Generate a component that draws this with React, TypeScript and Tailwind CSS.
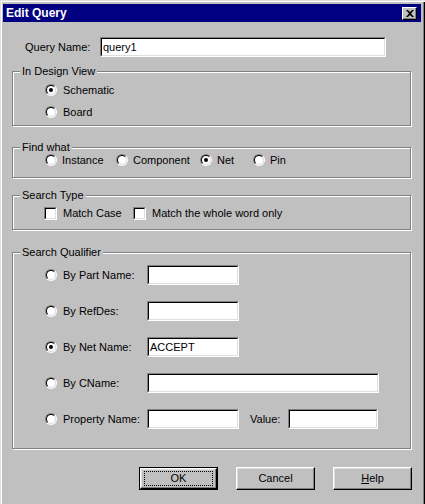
import React from "react";

const font = { fontFamily: '"Liberation Sans", Arial, sans-serif' };

function Radio({ checked = false }: { checked?: boolean }) {
  return (
    <span className="inline-block w-[12px] h-[12px] shrink-0 rounded-full border border-t-[#808080] border-l-[#808080] border-b-white border-r-white">
      <span className="flex w-full h-full items-center justify-center rounded-full border border-t-black border-l-black border-b-[#dfdfdf] border-r-[#dfdfdf] bg-white">
        {checked && <span className="block w-[4px] h-[4px] rounded-full bg-black" />}
      </span>
    </span>
  );
}

function Checkbox() {
  return (
    <span className="inline-block w-[13px] h-[13px] shrink-0 border border-t-[#808080] border-l-[#808080] border-b-white border-r-white">
      <span className="block w-full h-full border border-t-black border-l-black border-b-[#dfdfdf] border-r-[#dfdfdf] bg-white" />
    </span>
  );
}

function Field({ value = "", className = "" }: { value?: string; className?: string }) {
  return (
    <div
      className={`h-[20px] shrink-0 border border-t-[#808080] border-l-[#808080] border-b-white border-r-white ${className}`}
    >
      <div className="flex h-full items-center border border-t-black border-l-black border-b-[#dfdfdf] border-r-[#dfdfdf] bg-white px-[1px] text-[11px] text-black">
        {value}
      </div>
    </div>
  );
}

function Group({ title, className = "", children }: { title: string; className?: string; children: React.ReactNode }) {
  return (
    <div className={`relative w-[399px] border border-[#808080] shadow-[inset_1px_1px_0_#fff,1px_1px_0_#fff] ${className}`}>
      {/* label sits over the etched line */}
      <span className="absolute -top-[7px] left-[7px] bg-[#c0c0c0] px-[2px] text-[11px] leading-[13px] text-black">
        {title}
      </span>
      {children}
    </div>
  );
}

function Button({ children, isDefault = false }: { children: React.ReactNode; isDefault?: boolean }) {
  const face = (
    <div className="flex h-full w-full items-center justify-center border border-t-white border-l-white border-b-black border-r-black shadow-[inset_-1px_-1px_0_#808080,inset_1px_1px_0_#dfdfdf] text-[11px] text-black">
      {isDefault ? (
        <span className="flex h-[15px] w-[69px] items-center justify-center border border-dotted border-black">{children}</span>
      ) : (
        children
      )}
    </div>
  );
  return (
    <div className={`h-[23px] w-[79px] ${isDefault ? "border border-black" : ""}`}>{face}</div>
  );
}

export default function App() {
  return (
    <div
      className="w-[425px] h-[504px] overflow-hidden bg-[#c0c0c0] pl-[3px] pr-[4px] pt-[4px] shadow-[inset_1px_1px_0_#dfdfdf,inset_2px_2px_0_#fff,inset_-1px_0_0_#000,inset_-2px_0_0_#808080]"
      style={font}
    >
      {/* title bar */}
      <div className="flex h-[18px] items-center justify-between bg-[#000080] pl-[3px] pr-[4px]">
        <span className="text-[12px] font-bold text-white">Edit Query</span>
        <div className="flex h-[13px] w-[15px] items-center justify-center border border-t-white border-l-white border-b-black border-r-black bg-[#c0c0c0] shadow-[inset_-1px_-1px_0_#808080]">
          <svg width="8" height="7" viewBox="0 0 8 7">
            <path d="M0 0h2l2 2 2-2h2L5 3.5 8 7H6L4 5 2 7H0l3-3.5z" fill="#000" />
          </svg>
        </div>
      </div>

      <div className="pl-[9px]">
        {/* query name */}
        <div className="mt-[15px] flex items-center">
          <span className="ml-[13px] w-[75px] text-[11px] text-black">Query Name:</span>
          <Field value="query1" className="w-[286px]" />
        </div>

        <Group title="In Design View" className="mt-[14px] h-[55px] pt-[7px] pl-[32px]">
          <div className="flex h-[22px] items-center gap-[6px] text-[11px] text-black">
            <Radio checked />
            <span>Schematic</span>
          </div>
          <div className="flex h-[22px] items-center gap-[6px] text-[11px] text-black">
            <Radio />
            <span>Board</span>
          </div>
        </Group>

        <Group title="Find what" className="mt-[21px] h-[31px] pt-[3px] pl-[32px]">
          <div className="flex h-[18px] items-center text-[11px] text-black">
            <div className="flex w-[71px] items-center gap-[5px]">
              <Radio />
              <span>Instance</span>
            </div>
            <div className="flex w-[84px] items-center gap-[5px]">
              <Radio />
              <span>Component</span>
            </div>
            <div className="flex w-[53px] items-center gap-[5px]">
              <Radio checked />
              <span>Net</span>
            </div>
            <div className="flex items-center gap-[5px]">
              <Radio />
              <span>Pin</span>
            </div>
          </div>
        </Group>

        <Group title="Search Type" className="mt-[17px] h-[35px] pt-[8px] pl-[31px]">
          <div className="flex h-[18px] items-center text-[11px] text-black">
            <div className="flex w-[89px] items-center gap-[6px]">
              <Checkbox />
              <span>Match Case</span>
            </div>
            <div className="flex items-center gap-[6px]">
              <Checkbox />
              <span>Match the whole word only</span>
            </div>
          </div>
        </Group>

        <Group title="Search Qualifier" className="mt-[22px] h-[197px] pt-[12px] pl-[32px]">
          <div className="flex flex-col gap-[16px] text-[11px] text-black">
            <div className="flex h-[20px] items-center">
              <div className="flex w-[102px] items-center gap-[6px]">
                <Radio />
                <span>By Part Name:</span>
              </div>
              <Field className="w-[92px]" />
            </div>
            <div className="flex h-[20px] items-center">
              <div className="flex w-[102px] items-center gap-[6px]">
                <Radio />
                <span>By RefDes:</span>
              </div>
              <Field className="w-[92px]" />
            </div>
            <div className="flex h-[20px] items-center">
              <div className="flex w-[102px] items-center gap-[6px]">
                <Radio checked />
                <span>By Net Name:</span>
              </div>
              <Field value="ACCEPT" className="w-[92px]" />
            </div>
            <div className="flex h-[20px] items-center">
              <div className="flex w-[102px] items-center gap-[6px]">
                <Radio />
                <span>By CName:</span>
              </div>
              <Field className="w-[232px]" />
            </div>
            <div className="flex h-[20px] items-center">
              <div className="flex w-[102px] items-center gap-[6px]">
                <Radio />
                <span>Property Name:</span>
              </div>
              <Field className="w-[92px]" />
              <span className="ml-[11px] w-[38px]">Value:</span>
              <Field className="w-[90px]" />
            </div>
          </div>
        </Group>

        {/* buttons */}
        <div className="mt-[18px] flex w-[400px] justify-end gap-[18px]">
          <Button isDefault>OK</Button>
          <Button>Cancel</Button>
          <Button>
            <span>
              <span className="underline">H</span>elp
            </span>
          </Button>
        </div>
      </div>
    </div>
  );
}
